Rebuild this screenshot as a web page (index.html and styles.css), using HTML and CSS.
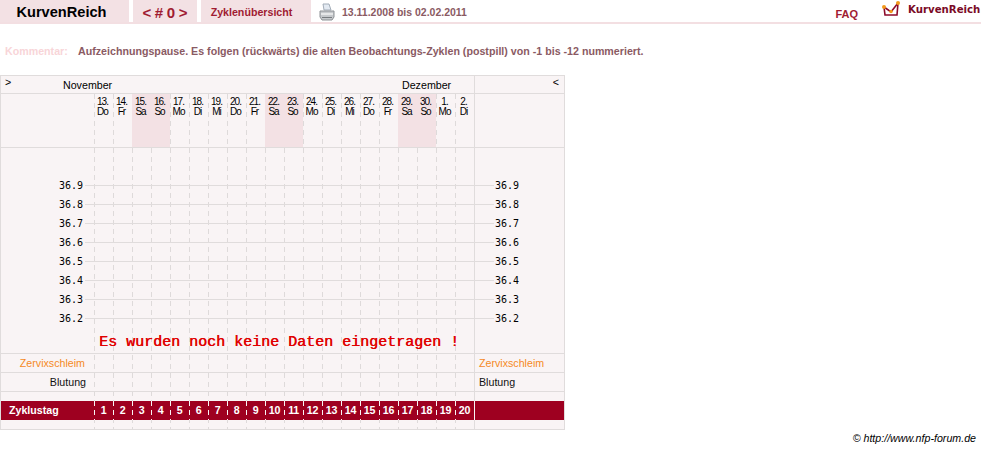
FILE: index.html
```html
<!DOCTYPE html>
<html lang="de">
<head>
    <meta charset="UTF-8">
    <title>KurvenReich</title>
    <link rel="stylesheet" href="styles.css">
</head>

<body>
    <div class="topbar">
        <div class="tab tab-brand">KurvenReich</div>
        <div class="tab tab-nav">&lt; # 0 &gt;</div>
        <div class="tab tab-link">Zyklenübersicht</div>
        <svg class="printer" viewBox="0 0 16 18" width="16" height="18">
            <path d="M4 1 L10 1 L12 7 L5 7 Z" fill="#e3eaf2" stroke="#a3adb8" stroke-width="1" />
            <path d="M1 8 L15 8 L15 14 L13 17 L3 17 L1 14 Z" fill="#c6c9cc" stroke="#8d9195" stroke-width="1" />
            <path d="M2 11 L14 11" stroke="#f0f1f2" stroke-width="1.5" />
            <path d="M3 14.5 L13 14.5" stroke="#777b7f" stroke-width="1" />
        </svg>
        <div class="date-range">13.11.2008 bis 02.02.2011</div>
        <a class="faq">FAQ</a>
        <svg class="logo" viewBox="0 0 20 18" width="20" height="18">
            <path d="M3 7 L4 15 L16 15 L17 3" fill="none" stroke="#8c0a2a" stroke-width="1.6" />
            <path d="M3 7 L10 12 L17 3" fill="none" stroke="#8c0a2a" stroke-width="1.6" />
            <circle cx="3" cy="7" r="2" fill="#f39a1d" />
            <circle cx="10" cy="11.5" r="1.8" fill="#f39a1d" />
            <circle cx="17" cy="3" r="2" fill="#f39a1d" />
        </svg>
        <div class="logo-text">KurvenReich</div>
    </div>

    <div class="comment">
        <span class="comment-label">Kommentar:</span>
        <span class="comment-text">Aufzeichnungspause. Es folgen (rückwärts) die alten Beobachtungs-Zyklen (postpill) von -1 bis -12 nummeriert.</span>
    </div>

    <div class="chart">
        <div class="col-lines">
            <i></i><i></i><i></i><i></i><i></i><i></i><i></i><i></i><i></i><i></i>
            <i></i><i></i><i></i><i></i><i></i><i></i><i></i><i></i><i></i><i></i>
        </div>

        <div class="row month-row">
            <div class="months">
                <span class="arrow">&gt;</span>
                <span class="month-nov">November</span>
                <span class="month-dez">Dezember</span>
            </div>
            <div class="side arrow-right">&lt;</div>
        </div>

        <div class="row day-row">
            <div class="lead"></div>
            <div class="day">13.<br>Do</div>
            <div class="day">14.<br>Fr</div>
            <div class="day weekend">15.<br>Sa</div>
            <div class="day weekend">16.<br>So</div>
            <div class="day">17.<br>Mo</div>
            <div class="day">18.<br>Di</div>
            <div class="day">19.<br>Mi</div>
            <div class="day">20.<br>Do</div>
            <div class="day">21.<br>Fr</div>
            <div class="day weekend">22.<br>Sa</div>
            <div class="day weekend">23.<br>So</div>
            <div class="day">24.<br>Mo</div>
            <div class="day">25.<br>Di</div>
            <div class="day">26.<br>Mi</div>
            <div class="day">27.<br>Do</div>
            <div class="day">28.<br>Fr</div>
            <div class="day weekend">29.<br>Sa</div>
            <div class="day weekend">30.<br>So</div>
            <div class="day">1.<br>Mo</div>
            <div class="day">2.<br>Di</div>
            <div class="side"></div>
        </div>

        <div class="temps">
            <div class="temp"><span class="temp-l">36.9</span><span class="temp-line"></span><span class="temp-r">36.9</span></div>
            <div class="temp"><span class="temp-l">36.8</span><span class="temp-line"></span><span class="temp-r">36.8</span></div>
            <div class="temp"><span class="temp-l">36.7</span><span class="temp-line"></span><span class="temp-r">36.7</span></div>
            <div class="temp"><span class="temp-l">36.6</span><span class="temp-line"></span><span class="temp-r">36.6</span></div>
            <div class="temp"><span class="temp-l">36.5</span><span class="temp-line"></span><span class="temp-r">36.5</span></div>
            <div class="temp"><span class="temp-l">36.4</span><span class="temp-line"></span><span class="temp-r">36.4</span></div>
            <div class="temp"><span class="temp-l">36.3</span><span class="temp-line"></span><span class="temp-r">36.3</span></div>
            <div class="temp"><span class="temp-l">36.2</span><span class="temp-line"></span><span class="temp-r">36.2</span></div>
            <div class="no-data">Es wurden noch keine Daten eingetragen !</div>
            <div class="side-rule"></div>
        </div>

        <div class="row label-row zervix">
            <div class="lead">Zervixschleim</div>
            <div class="mid"></div>
            <div class="side">Zervixschleim</div>
        </div>
        <div class="row label-row">
            <div class="lead">Blutung</div>
            <div class="mid"></div>
            <div class="side">Blutung</div>
        </div>
        <div class="row gap-row">
            <div class="lead"></div>
            <div class="mid"></div>
            <div class="side"></div>
        </div>

        <div class="row cycle-row">
            <div class="lead">Zyklustag</div>
            <div class="num">1</div>
            <div class="num">2</div>
            <div class="num">3</div>
            <div class="num">4</div>
            <div class="num">5</div>
            <div class="num">6</div>
            <div class="num">7</div>
            <div class="num">8</div>
            <div class="num">9</div>
            <div class="num">10</div>
            <div class="num">11</div>
            <div class="num">12</div>
            <div class="num">13</div>
            <div class="num">14</div>
            <div class="num">15</div>
            <div class="num">16</div>
            <div class="num">17</div>
            <div class="num">18</div>
            <div class="num">19</div>
            <div class="num">20</div>
            <div class="side"></div>
        </div>

        <div class="row end-row">
            <div class="lead"></div>
            <div class="mid"></div>
            <div class="side"></div>
        </div>
    </div>

    <div class="footer">© http://www.nfp-forum.de</div>
</body>
</html>
```

FILE: styles.css
```css
* {
    margin: 0;
    padding: 0;
    box-sizing: border-box;
}

body {
    background: #fff;
    font-family: "Liberation Sans", Arial, sans-serif;
    height: 449px;
    overflow: hidden;
}

.topbar {
    display: flex;
    align-items: center;
    height: 24px;
    border-bottom: 2px solid #f3dfe2;
}

.tab {
    height: 22px;
    background: #f3e1e4;
    display: flex;
    align-items: center;
    justify-content: center;
    font-weight: 700;
    margin-right: 4px;
}

.tab-brand {
    width: 129px;
    font-size: 14.6px;
    color: #000;
    padding: 1px 6px 0 0;
}

.tab-nav {
    width: 64px;
    font-size: 15px;
    color: #a01c32;
    padding-top: 2px;
    word-spacing: -0.5px;
}

.tab-link {
    width: 110px;
    font-size: 10.67px;
    color: #a01c32;
    margin-right: 0;
    padding: 1px 9px 0 0;
}

.printer {
    margin-left: 8px;
    margin-top: 1px;
}

.date-range {
    margin-left: 7px;
    font-size: 10.5px;
    font-weight: 700;
    color: #8a5a63;
    padding-top: 1px;
}

.faq {
    margin-left: auto;
    font-size: 11px;
    font-weight: 700;
    color: #a01c32;
    padding-top: 6px;
    margin-right: 1px;
}

.logo {
    margin-left: 22px;
    margin-bottom: 5px;
}

.logo-text {
    width: 73px;
    margin-left: 7px;
    font-family: "DejaVu Sans", sans-serif;
    font-size: 10.2px;
    font-weight: 700;
    color: #7a0a26;
    white-space: nowrap;
    padding-bottom: 4px;
}

.comment {
    display: flex;
    padding: 21px 0 0 5px;
    height: 51px;
    font-size: 10.67px;
    font-weight: 700;
}

.comment-label {
    width: 73px;
    color: #f8d5d8;
}

.comment-text {
    color: #8a5a63;
}

/* chart: 94 + 20 x 19 + 90 */
.chart {
    position: relative;
    width: 565px;
    background: #f9f4f5;
    border: 1px solid #e0dcdc;
    font-size: 10.67px;
}

.col-lines {
    position: absolute;
    left: 93px;
    top: 18px;
    bottom: 0;
    width: 380px;
    display: flex;
}

.col-lines i {
    width: 19px;
    background: repeating-linear-gradient(#dedada 0 5px, transparent 5px 9px) left top / 1px 100% no-repeat;
}

.row {
    position: relative;
    display: flex;
    border-bottom: 1px solid #e0dcdc;
}

.lead {
    width: 93px;
    flex: none;
}

.mid {
    width: 380px;
    flex: none;
}

.side {
    width: 90px;
    flex: none;
    border-left: 1px solid #e0dcdc;
    padding-left: 4px;
}

.month-row {
    height: 18px;
    line-height: 19px;
}

.months {
    width: 473px;
    display: flex;
}

.arrow {
    width: 62px;
    padding-left: 4px;
    line-height: 13px;
}

.month-nov {
    width: 339px;
}

.arrow-right {
    text-align: right;
    padding-right: 5px;
    line-height: 13px;
}

.day-row {
    height: 54px;
}

.day {
    width: 19px;
    flex: none;
    font-size: 10px;
    line-height: 10px;
    letter-spacing: -1px;
    text-align: center;
    padding: 3px 2px 0 0;
}

.weekend {
    background: #f3e1e4;
}

.temps {
    position: relative;
    height: 206px;
    padding-top: 28px;
    border-bottom: 1px solid #e0dcdc;
    font-family: "DejaVu Sans Mono", "Liberation Mono", monospace;
    font-size: 10px;
    color: #000;
}

.temp {
    display: flex;
    align-items: center;
    height: 19px;
}

.temp-l {
    width: 84px;
    flex: none;
    padding-right: 2px;
    text-align: right;
}

.temp-line {
    flex: 1;
    height: 1px;
    background: #e0dcdc;
}

.temp-r {
    width: 70px;
    flex: none;
    padding-left: 1px;
}

.no-data {
    margin: 6px 0 0 98px;
    font-family: "Liberation Mono", monospace;
    font-size: 15px;
    color: #e00000;
    text-shadow: 0.4px 0 #e00000;
    white-space: nowrap;
}

.side-rule {
    position: absolute;
    left: 473px;
    top: 0;
    bottom: 0;
    width: 1px;
    background: #e0dcdc;
}

.label-row {
    height: 19px;
    line-height: 18px;
    color: #111;
}

.label-row .lead {
    text-align: right;
    padding-right: 8px;
}

.zervix {
    color: #f58a1f;
}

.zervix .lead {
    padding-right: 9px;
}

.gap-row {
    height: 9px;
    border-bottom: 0;
}

.cycle-row {
    height: 19px;
    line-height: 19px;
    background: #9e0020;
    color: #fff;
    font-weight: 700;
    border-bottom: 0;
}

.cycle-row .lead {
    padding-left: 8px;
}

.num {
    width: 19px;
    flex: none;
    text-align: center;
    letter-spacing: -0.3px;
    background: repeating-linear-gradient(#f9f4f5 0 5px, transparent 5px 9px) left top / 1px 100% no-repeat;
}

.cycle-row .side {
    border-left-color: #f9f4f5;
}

.end-row {
    height: 9px;
    border-bottom: 0;
}

.footer {
    margin-top: 2px;
    padding-right: 5px;
    text-align: right;
    font-size: 10.67px;
    font-style: italic;
    color: #000;
}
```
